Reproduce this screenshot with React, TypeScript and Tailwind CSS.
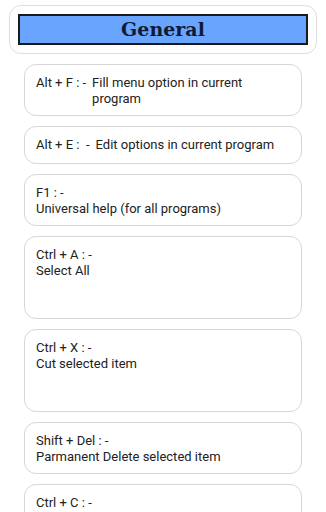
import React from 'react'

type Shortcut = {
  keys: string
  desc: string
  inline?: boolean
  tall?: boolean
}

const shortcuts: Shortcut[] = [
  { keys: 'Alt + F : -', desc: 'Fill menu option in current program', inline: true },
  { keys: 'Alt + E :  -', desc: 'Edit options in current program', inline: true },
  { keys: 'F1 : -', desc: 'Universal help (for all programs)' },
  { keys: 'Ctrl + A : -', desc: 'Select All', tall: true },
  { keys: 'Ctrl + X : -', desc: 'Cut selected item', tall: true },
  { keys: 'Shift + Del : -', desc: 'Parmanent Delete selected item' },
  { keys: 'Ctrl + C : -', desc: 'Copy selected item' },
]

export default function App() {
  return (
    <div className="min-h-screen bg-white font-['Roboto',sans-serif] text-[13px] leading-[15.5px] text-[#222222]">
      {/* Header */}
      <div className="px-[9px] pt-[5px]">
        <div className="rounded-[12px] border-[1.5px] border-[#dedede] px-[8px] py-[8px]">
          <div className="flex h-[31px] items-center justify-center border-2 border-[#1a1a1a] bg-[#69a5ff]">
            <h1 className="font-['DejaVu_Serif',serif] text-[19px] font-bold text-[#111a33]">
              General
            </h1>
          </div>
        </div>
      </div>

      {/* Shortcut list */}
      <div className="flex flex-col gap-[10px] px-[24px] pt-[10px]">
        {shortcuts.map((s) => (
          <div
            key={s.keys}
            className={`min-h-[38px] rounded-[12px] border border-[#d6d6d6] px-[11px] pt-[10px] pb-[9px] ${s.tall ? 'h-[83px]' : ''}`}
          >
            {s.inline ? (
              <div className="flex">
                <span className="shrink-0 whitespace-pre pr-[6px]">{s.keys}</span>
                <span>{s.desc}</span>
              </div>
            ) : (
              <div>
                <div>{s.keys}</div>
                <div>{s.desc}</div>
              </div>
            )}
          </div>
        ))}
      </div>
    </div>
  )
}
